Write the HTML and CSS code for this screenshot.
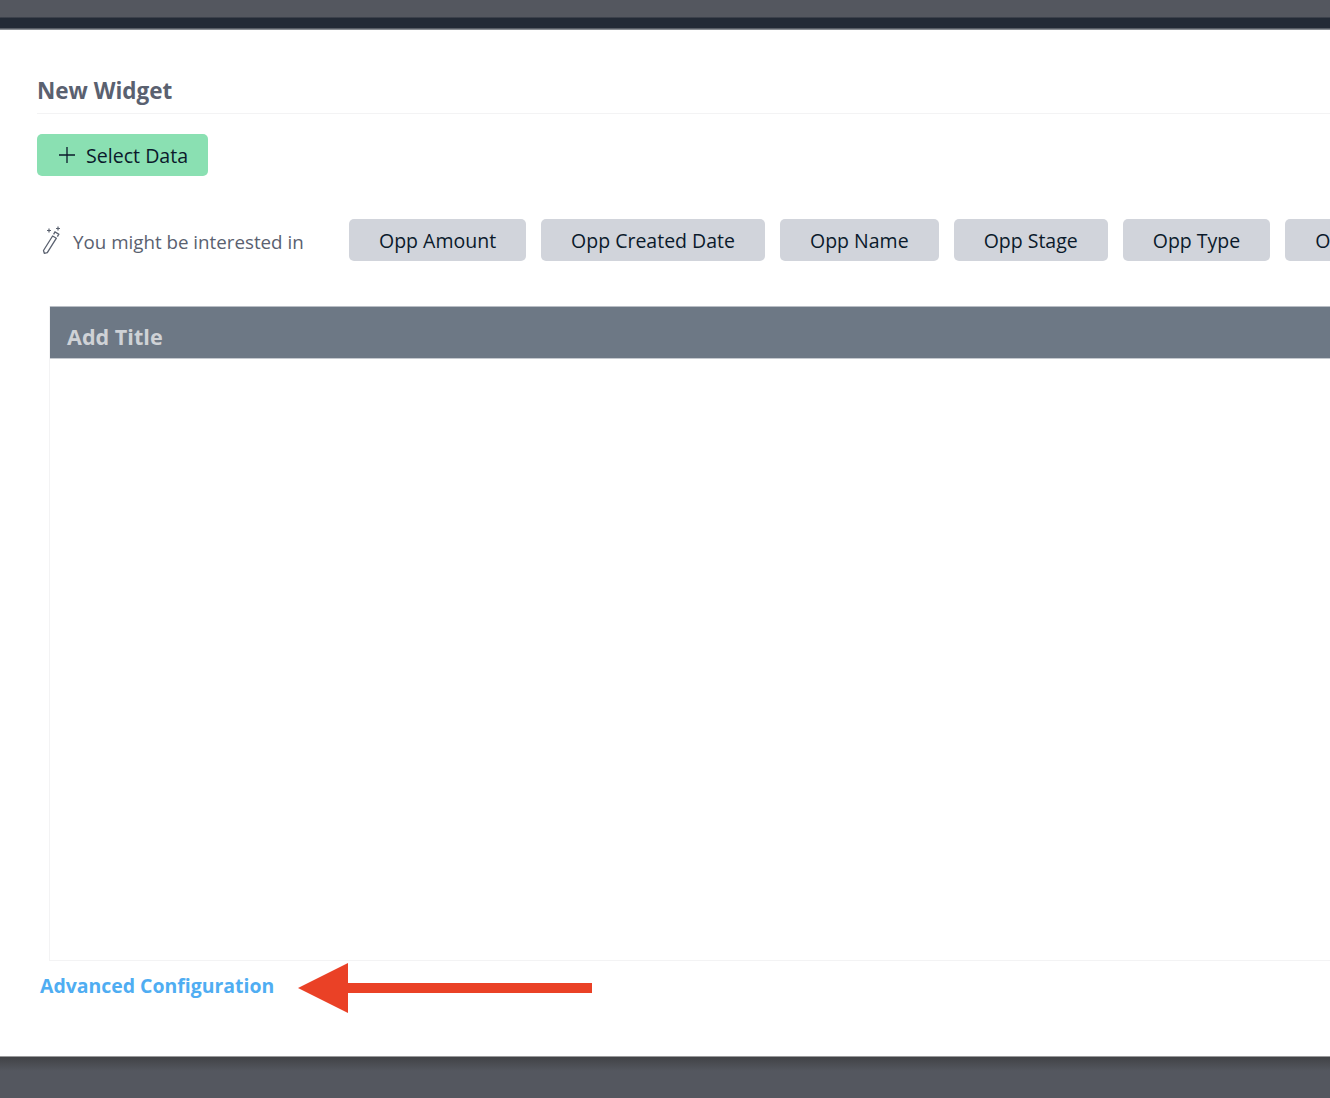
FILE: index.html
```html
<!DOCTYPE html>
<html lang="en">

<head>
    <meta charset="UTF-8">
    <title>New Widget</title>
    <link rel="stylesheet" href="styles.css">
</head>

<body>
    <div class="top-bar"></div>
    <div class="modal">
        <h2 class="modal-title">New Widget</h2>
        <button class="select-btn">
            <svg class="plus" width="18" height="18" viewBox="0 0 18 18"><path d="M9 1v16M1 9h16" fill="none" stroke="#0b1a2b" stroke-width="1.3"/></svg>
            Select Data
        </button>

        <div class="suggest">
            <div class="suggest-label">
                <svg class="wand" width="22" height="30" viewBox="0 0 22 30">
                    <path d="M2.500 25.500l9.100-14.500 3.800 2.200-9.100 14.500-3 .6z" fill="none" stroke="#5b6270" stroke-width="1.3" stroke-linejoin="round"/>
                    <path d="M12.600 9.400l1.400-2.400 3.800 2.200-1.400 2.400" fill="none" stroke="#5b6270" stroke-width="1.3"/>
                    <path d="M8 3.500v4M6 5.500h4M17 1.500v4M15 3.500h4" fill="none" stroke="#5b6270" stroke-width="1.2"/>
                </svg>
                <span class="suggest-text">You might be interested in</span>
            </div>
            <div class="chips">
                <a class="chip" href="#">Opp Amount</a>
                <a class="chip" href="#">Opp Created Date</a>
                <a class="chip" href="#">Opp Name</a>
                <a class="chip" href="#">Opp Stage</a>
                <a class="chip" href="#">Opp Type</a>
                <a class="chip" href="#">Opp Owner</a>
            </div>
        </div>

        <div class="widget">
            <div class="widget-head">Add Title</div>
            <div class="widget-body"></div>
        </div>

        <div class="advanced">
            <a class="advanced-link" href="#">Advanced Configuration</a>
            <svg class="arrow" width="294" height="50" viewBox="0 0 294 50"><path d="M0 25L50 0V20H294V30H50V50Z" fill="#ea4126"/></svg>
        </div>
    </div>
    <div class="bottom-bar"></div>
</body>

</html>
```

FILE: styles.css
```css
* {
    margin: 0;
    padding: 0;
    box-sizing: border-box;
}

html,
body {
    height: 1098px;
    overflow: hidden;
}

body {
    font-family: "Open Sans", "Noto Sans", sans-serif;
    background: #54575f;
    display: flex;
    flex-direction: column;
}

/* top and bottom backdrop */
.top-bar {
    height: 30px;
    flex: none;
    background: linear-gradient(#54575f 0, #54575f 17px, #232a36 18px, #232a36 28px, #8b8e94 29px);
}

.bottom-bar {
    flex: 1;
    background: linear-gradient(#414246 0, #54575f 14px);
    border-top: 1px solid #9a9a9c;
}

.modal {
    height: 1026px;
    flex: none;
    background: #fff;
    padding: 46px 0 0 37px;
    overflow: hidden;
}

.modal-title {
    font-size: 22.5px;
    line-height: 30px;
    font-weight: 700;
    color: #5a6170;
    padding-bottom: 7px;
    border-bottom: 1px solid #f3f3f4;
}

.select-btn {
    display: flex;
    align-items: center;
    gap: 10px;
    width: 171px;
    height: 42px;
    margin-top: 20px;
    padding-left: 21px;
    border: 0;
    border-radius: 5px;
    background: #8ae0b2;
    color: #0b1a2b;
    font: 400 19.6px "Open Sans", sans-serif;
}

.suggest {
    display: flex;
    align-items: center;
    margin-top: 43px;
    height: 42px;
}

.suggest-label {
    display: flex;
    align-items: center;
    width: 312px;
    flex: none;
    padding-left: 4px;
    gap: 10px;
    color: #5a6170;
    font-size: 18.75px;
}

.suggest-text {
    padding-top: 2px;
}

.chips {
    display: flex;
    gap: 15px;
    flex: none;
}

.chip {
    display: block;
    height: 42px;
    line-height: 44px;
    padding: 0 30px;
    border-radius: 5px;
    background: #d1d4db;
    color: #0b1a2b;
    font-size: 19.5px;
    text-decoration: none;
    white-space: nowrap;
}

.widget {
    margin: 45px 0 0 12px;
    height: 655px;
    border-left: 1px solid #f3f3f4;
    border-bottom: 1px solid #f3f3f4;
}

.widget-head {
    height: 53px;
    line-height: 60px;
    padding-left: 17px;
    background: #6d7885;
    border-top: 1px solid #b9bec5;
    border-bottom: 1px solid #c5c9cf;
    color: #cfd2d6;
    font-size: 21.6px;
    font-weight: 700;
}

.advanced {
    display: flex;
    align-items: center;
    gap: 24px;
    padding-left: 3px;
    margin-top: 2px;
}

.advanced-link {
    color: #4fadf2;
    font-size: 19.45px;
    line-height: 46px;
    padding-bottom: 4px;
    font-weight: 700;
    text-decoration: none;
    white-space: nowrap;
}
```
